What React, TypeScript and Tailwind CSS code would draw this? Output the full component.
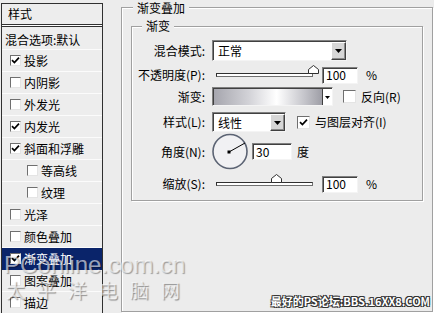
import React from "react";

type Item = { name: string; checked?: boolean; indent?: boolean; active?: boolean };

const items: Item[] = [
  { name: "投影", checked: true },
  { name: "内阴影" },
  { name: "外发光" },
  { name: "内发光", checked: true },
  { name: "斜面和浮雕", checked: true },
  { name: "等高线", indent: true },
  { name: "纹理", indent: true },
  { name: "光泽" },
  { name: "颜色叠加" },
  { name: "渐变叠加", checked: true, active: true },
  { name: "图案叠加" },
  { name: "描边" },
];

const Tick = () => (
  <svg width="9" height="9" viewBox="0 0 9 9">
    <path d="M1 4.2 L3.4 6.6 L8 1.6" fill="none" stroke="#000" strokeWidth="1.7" />
  </svg>
);

const Box = ({ checked, big }: { checked?: boolean; big?: boolean }) => (
  <span
    className={
      (big ? "w-[13px] h-[13px] " : "w-[11px] h-[11px] ") +
      "shrink-0 flex items-center justify-center bg-white border border-[#6f6f6f] border-r-[#e4e4e4] border-b-[#e4e4e4]"
    }
  >
    {checked && <Tick />}
  </span>
);

const Arrow = () => (
  <svg width="7" height="4" viewBox="0 0 7 4">
    <path d="M0 0 H7 L3.5 4 Z" fill="#000" />
  </svg>
);

const DropButton = () => (
  <span className="w-[15px] h-full shrink-0 flex items-center justify-center bg-[#d6d6d6] border border-white border-r-[#404040] border-b-[#404040] shadow-[inset_-1px_-1px_0_#8a8a8a]">
    <Arrow />
  </span>
);

const Select = ({ value, w }: { value: string; w: string }) => (
  <div className={w + " h-full flex bg-white border border-[#808080] border-r-[#f4f4f4] border-b-[#f4f4f4] shadow-[inset_1px_1px_0_#404040] pl-[1px] pt-[1px]"}>
    <span className="flex-1 pl-[4px] flex items-center">{value}</span>
    <DropButton />
  </div>
);

const Field = ({ value, w }: { value: string; w: string }) => (
  <div className={w + " h-[17px] bg-white border border-[#808080] border-r-[#f4f4f4] border-b-[#f4f4f4] shadow-[inset_1px_1px_0_#404040] pl-[3px] flex items-center"}>
    {value}
  </div>
);

const Slider = ({ pos }: { pos: number }) => (
  <div className="relative w-[110px] h-full flex items-center">
    <div className="ml-[4px] w-[97px] h-[4px] bg-white border border-[#303030] border-r-[#707070] border-b-[#707070]" />
    <svg className="absolute top-[-1px]" style={{ left: pos }} width="11" height="9" viewBox="0 0 11 9">
      <path d="M0.5 8.5 V4.5 L5.5 0.5 L10.5 4.5 V8.5 Z" fill="#fff" stroke="#303030" />
    </svg>
  </div>
);

const Label = ({ children }: { children: React.ReactNode }) => (
  <span className="w-[73px] text-right shrink-0 mr-[7px] whitespace-nowrap">{children}</span>
);

export default function App() {
  return (
    <div className="relative w-[434px] h-[313px] overflow-hidden bg-[#ececec] flex text-[12px] leading-[14px] text-black font-['Noto_Sans_CJK_SC',sans-serif]">
      {/* style list */}
      <div className="ml-[1px] mt-[3px] w-[102px] h-[310px] bg-[#ededed] border-l border-r border-t border-[#303030] flex flex-col">
        <div className="h-[21px] shrink-0 pl-[6px] flex items-center border-b border-[#303030]">样式</div>
        <div className="h-[1px] shrink-0 bg-white" />
        <div className="h-[24px] shrink-0 pl-[3px] pt-[3px] flex items-center border-t border-b border-t-[#303030] border-b-[#fbfbfb]">
          混合选项:默认
        </div>
        {items.map((it) => (
          <div
            key={it.name}
            className={
              "h-[22px] shrink-0 flex items-center gap-[3px] border-b " +
              (it.indent ? "pl-[25px] " : "pl-[8px] ") +
              (it.active ? "bg-[#0a246a] text-white border-[#0a246a]" : "border-[#fbfbfb]")
            }
          >
            <Box checked={it.checked} />
            <span>{it.name}</span>
          </div>
        ))}
      </div>

      {/* gradient overlay panel */}
      <div className="relative ml-[18px] mt-[7px] w-[312px] h-[305px] border border-[#a0a0a0] shadow-[inset_1px_1px_0_#fff,1px_1px_0_#fff]">
        <span className="absolute left-[11px] -top-[7px] px-[4px] bg-[#ececec]">渐变叠加</span>

        <div className="relative ml-[9px] mt-[18px] w-[292px] h-[175px] border border-[#a0a0a0] shadow-[inset_1px_1px_0_#fff,1px_1px_0_#fff] pt-[13px]">
          <span className="absolute left-[10px] -top-[8px] px-[4px] bg-[#ececec]">渐变</span>

          <div className="flex items-center h-[21px]">
            <Label>混合模式:</Label>
            <Select value="正常" w="w-[135px]" />
          </div>

          <div className="flex items-center h-[18px] mt-[5px]">
            <Label>不透明度(P):</Label>
            <Slider pos={96} />
            <Field value="100" w="w-[36px]" />
            <span className="ml-[8px]">%</span>
          </div>

          <div className="flex items-center h-[19px] mt-[3px]">
            <Label>渐变:</Label>
            <div className="w-[121px] h-full flex bg-white border border-[#808080] border-r-[#f4f4f4] border-b-[#f4f4f4] shadow-[inset_1px_1px_0_#404040] pl-[1px] pt-[1px]">
              <span className="flex-1 bg-[linear-gradient(to_right,#a6a6ae,#d2d2d7_32%,#ffffff_58%,#c4c4ca_84%,#9e9ea6)]" />
              <span className="w-[10px] border-l border-[#404040] bg-white flex items-center justify-center">
                <svg width="5" height="3" viewBox="0 0 5 3">
                  <path d="M0 0 H5 L2.5 3 Z" fill="#000" />
                </svg>
              </span>
            </div>
            <span className="ml-[10px]">
              <Box big />
            </span>
            <span className="ml-[5px]">反向(R)</span>
          </div>

          <div className="flex items-center h-[20px] mt-[6px]">
            <Label>样式(L):</Label>
            <Select value="线性" w="w-[74px]" />
            <span className="ml-[11px]">
              <Box big checked />
            </span>
            <span className="ml-[5px]">与图层对齐(I)</span>
          </div>

          <div className="flex items-center h-[37px] mt-[1px]">
            <Label>角度(N):</Label>
            <svg className="-ml-[1px]" width="38" height="37" viewBox="0 0 38 37">
              <circle cx="19" cy="18.5" r="17" fill="#f1f1f3" stroke="#5c6474" strokeWidth="1.6" />
              <line x1="18" y1="19" x2="34" y2="10" stroke="#000" strokeWidth="1" />
              <rect x="16.5" y="17.5" width="3" height="3" fill="#000" />
            </svg>
            <span className="ml-[3px]">
              <Field value="30" w="w-[40px]" />
            </span>
            <span className="ml-[5px]">度</span>
          </div>

          <div className="flex items-center h-[18px] mt-[5px]">
            <Label>缩放(S):</Label>
            <Slider pos={59} />
            <Field value="100" w="w-[36px]" />
            <span className="ml-[8px]">%</span>
          </div>
        </div>
      </div>

      {/* watermarks */}
      <div className="absolute left-[4px] top-[252px] text-[24px] leading-[26px] text-white/60 font-['Liberation_Sans',sans-serif] [text-shadow:1px_1px_1px_rgba(0,0,0,0.35)] pointer-events-none">
        PConline.com.cn
      </div>
      <div className="absolute left-[6px] top-[279px] text-[19px] leading-[22px] tracking-[12px] text-white/60 [text-shadow:1px_1px_1px_rgba(0,0,0,0.4)] pointer-events-none">
        太平洋电脑网
      </div>
      <div className="absolute right-[4px] top-[294px] text-[11px] leading-[14px] text-white font-bold [text-shadow:1px_1px_0_#333,-1px_-1px_0_#333,1px_-1px_0_#333,-1px_1px_0_#333] pointer-events-none">
        最好的PS论坛:BBS.16XX8.COM
      </div>
    </div>
  );
}
